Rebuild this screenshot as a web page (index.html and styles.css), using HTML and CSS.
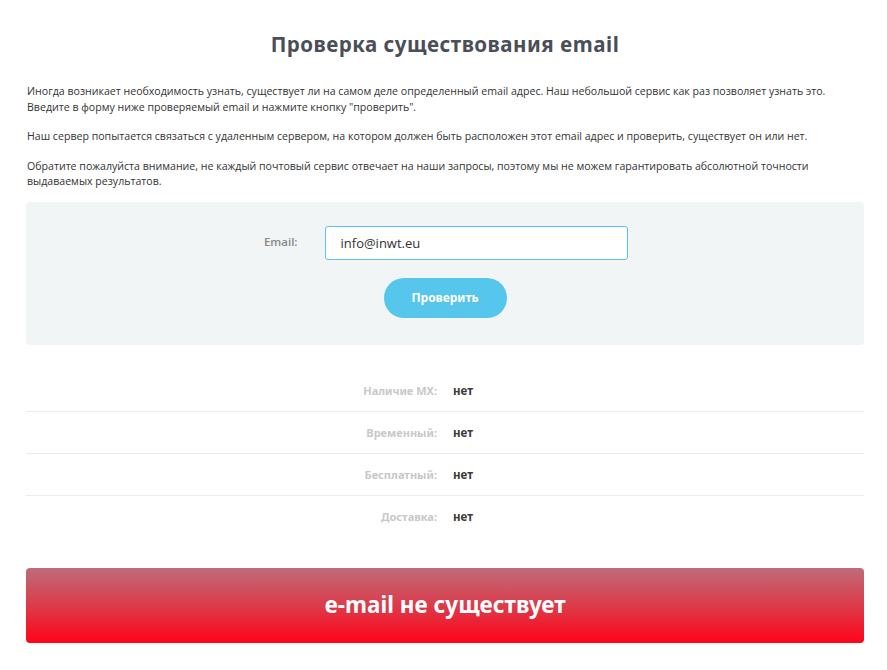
FILE: index.html
```html
<!DOCTYPE html>
<html lang="ru">
<head>
<meta charset="utf-8">
<title>Проверка существования email</title>
<link rel="stylesheet" href="styles.css">
</head>
<body>
<div class="page">
  <h1 class="title">Проверка существования email</h1>
  <div class="intro">
    <p class="text">Иногда возникает необходимость узнать, существует ли на самом деле определенный email адрес. Наш небольшой сервис как раз позволяет узнать это.<br>Введите в форму ниже проверяемый email и нажмите кнопку "проверить".</p>
    <p class="text">Наш сервер попытается связаться с удаленным сервером, на котором должен быть расположен этот email адрес и проверить, существует он или нет.</p>
    <p class="text">Обратите пожалуйста внимание, не каждый почтовый сервис отвечает на наши запросы, поэтому мы не можем гарантировать абсолютной точности выдаваемых результатов.</p>
  </div>

  <form class="check-form">
    <div class="field">
      <label class="field-label" for="email">Email:</label>
      <input class="field-input" id="email" type="text" value="info@inwt.eu">
    </div>
    <button class="btn-check" type="button">Проверить</button>
  </form>

  <div class="results">
    <div class="row"><span class="row-label">Наличие MX:</span><span class="row-value">нет</span></div>
    <div class="row"><span class="row-label">Временный:</span><span class="row-value">нет</span></div>
    <div class="row"><span class="row-label">Бесплатный:</span><span class="row-value">нет</span></div>
    <div class="row"><span class="row-label">Доставка:</span><span class="row-value">нет</span></div>
  </div>

  <div class="verdict">e-mail не существует</div>
</div>
</body>
</html>
```
FILE: styles.css
```css
* { box-sizing: border-box; }
html, body { margin: 0; padding: 0; background: #fff; }
body {
  font-family: "Open Sans", "Noto Sans", sans-serif;
  color: #333;
}
.page {
  padding: 0 23px 0 26px;
}
.title {
  margin: 0;
  padding-top: 32px;
  height: 84px;
  text-align: center;
  font-family: "Noto Sans", sans-serif;
  font-weight: 700;
  font-size: 20.5px;
  line-height: 24px;
  color: #4a4e57;
  letter-spacing: 0.5px;
}
.intro {
  display: flex;
  flex-direction: column;
  gap: 14px;
}
.text {
  margin: 0 0 0 1px;
  font-size: 10.6px;
  line-height: 15.5px;
  color: #333;
}
.check-form {
  margin-top: 12px;
  background: #f2f5f6;
  border-radius: 4px;
  height: 143px;
  padding-top: 24px;
  display: flex;
  flex-direction: column;
  align-items: center;
}
.field {
  display: flex;
  align-items: center;
  margin-left: -37px;
}
.field-label {
  width: 72px;
  font-size: 11.5px;
  font-weight: 600;
  color: #888;
  margin-right: 27px;
  text-align: right;
  padding-bottom: 3px;
}
.field-input {
  width: 303px;
  height: 34px;
  border: 1px solid #5bc3ea;
  border-radius: 3px;
  padding: 0 15px;
  font-family: "Open Sans", sans-serif;
  font-size: 13px;
  color: #333;
  background: #fff;
  outline: none;
}
.btn-check {
  margin-top: 18px;
  width: 123px;
  height: 40px;
  border: none;
  border-radius: 20px;
  background: #56c6ed;
  color: #fff;
  font-family: "Noto Sans", sans-serif;
  font-weight: 700;
  font-size: 12px;
  cursor: pointer;
}
.results {
  margin-top: 25px;
}
.row {
  height: 42px;
  display: flex;
  align-items: center;
  border-bottom: 1px solid #ececec;
  font-family: "Noto Sans", sans-serif;
  font-weight: 700;
  font-size: 11px;
}
.row:last-child { border-bottom: none; }
.row-label {
  width: 411px;
  text-align: right;
  color: #c8c8c8;
}
.row-value {
  margin-left: 16px;
  color: #3a3a3a;
  font-size: 11.5px;
}
.verdict {
  margin-top: 30px;
  height: 75px;
  border-radius: 4px;
  background: linear-gradient(to bottom, #bf6b79 0%, #d9404f 45%, #ff0419 100%);
  color: #fff;
  font-family: "Noto Sans", sans-serif;
  font-weight: 700;
  font-size: 22.5px;
  display: flex;
  align-items: center;
  justify-content: center;
  padding-bottom: 2px;
}
```
